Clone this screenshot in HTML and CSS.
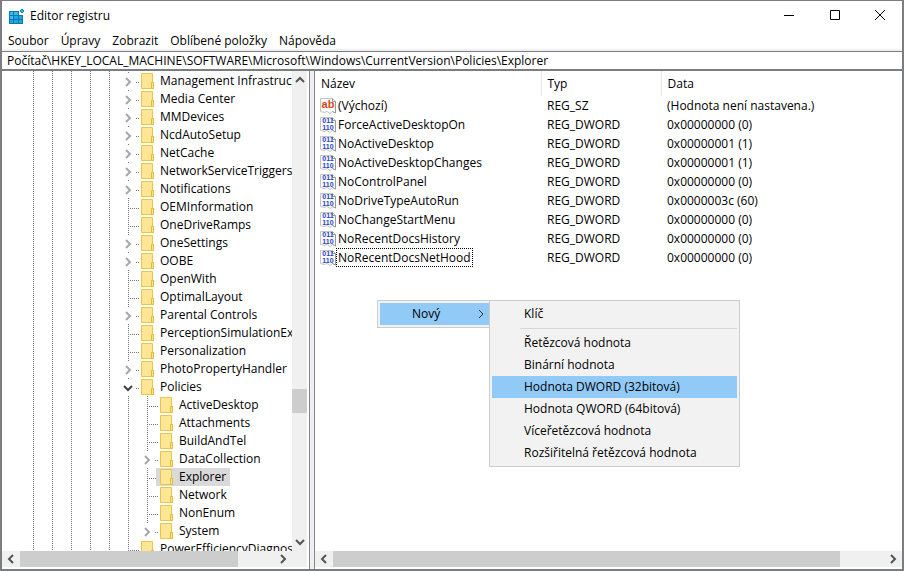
FILE: index.html
```html
<!DOCTYPE html>
<html lang="cs">
<head>
  <meta charset="UTF-8" />
  <meta name="viewport" content="width=device-width, initial-scale=1.0"/>
  <title>Editor registru</title>
  <link rel="stylesheet" href="styles.css">
</head>
<body>

  <!-- Shared icons -->
  <svg class="sprite" aria-hidden="true">
    <symbol id="folder" viewBox="0 0 14 16">
      <path d="M0.5 0.5H11.5V9.5H12.5V15.5H0.5Z" fill="#ffe694" stroke="#e8c64a"/>
      <path d="M10.5 15V9.5H12.5V15.5H10.5" fill="#ffe694" stroke="#e3bb35"/>
    </symbol>
    <symbol id="right" viewBox="0 0 10 10">
      <path d="M3 1L7 5L3 9" fill="none" stroke="currentColor" stroke-width="2"/>
    </symbol>
    <symbol id="left" viewBox="0 0 10 10">
      <path d="M7 1L3 5L7 9" fill="none" stroke="currentColor" stroke-width="2"/>
    </symbol>
    <symbol id="down" viewBox="0 0 10 10">
      <path d="M1 3L5 7L9 3" fill="none" stroke="currentColor" stroke-width="2"/>
    </symbol>
    <symbol id="up" viewBox="0 0 10 10">
      <path d="M1 7L5 3L9 7" fill="none" stroke="currentColor" stroke-width="2"/>
    </symbol>
    <symbol id="page" viewBox="0 0 16 16">
      <path d="M0.5 0.5H12.5L15.5 3.5V15L12.5 13.5L10 15.5L7 13.5L4 14.5L0.5 13.5Z" fill="#fbfbfb" stroke="#c4c4c4"/>
      <path d="M12.5 0.5V3.5H15.5V15L12.5 13.5" fill="none" stroke="#999"/>
    </symbol>
  </svg>

  <div class="window">
    <header class="title-bar">
      <svg class="app-icon" viewBox="0 0 17 17">
        <path d="M0 3H10V7H14V16H0Z" fill="#0878ad"/>
        <path d="M1 4H4V7H1ZM5 4H9V7H5ZM1 8H4V11H1Z" fill="#39bdf2"/>
        <path d="M5 8H9V11H5ZM10 8H13V11H10ZM1 12H4V15H1ZM5 12H9V15H5ZM10 12H13V15H10Z" fill="#22a5df"/>
        <path d="M13 1L15 3L13 5L11 3Z" fill="#39bdf2" stroke="#0878ad"/>
      </svg>
      <h1>Editor registru</h1>
      <div class="window-buttons">
        <button aria-label="Minimalizovat"><svg viewBox="0 0 10 10"><path d="M0 5.5H10"/></svg></button>
        <button aria-label="Maximalizovat"><svg viewBox="0 0 10 10"><path d="M0.5 0.5H9.5V9.5H0.5Z"/></svg></button>
        <button aria-label="Zavřít"><svg viewBox="0 0 10 10"><path d="M0 0L10 10M10 0L0 10"/></svg></button>
      </div>
    </header>

    <nav class="menu-bar">
      <button>Soubor</button>
      <button>Úpravy</button>
      <button>Zobrazit</button>
      <button>Oblíbené položky</button>
      <button>Nápověda</button>
    </nav>

    <input class="address" type="text" aria-label="Adresa" value="Počítač\HKEY_LOCAL_MACHINE\SOFTWARE\Microsoft\Windows\CurrentVersion\Policies\Explorer" />

    <main class="panes">
      <!-- Key tree -->
      <section class="pane tree-pane">
        <div class="pane-body">
          <ul class="tree">
            <li><button class="toggle" aria-label="Rozbalit"><svg><use href="#right"/></svg></button><a href="#"><svg><use href="#folder"/></svg>Management Infrastructure</a></li>
            <li><button class="toggle" aria-label="Rozbalit"><svg><use href="#right"/></svg></button><a href="#"><svg><use href="#folder"/></svg>Media Center</a></li>
            <li><button class="toggle" aria-label="Rozbalit"><svg><use href="#right"/></svg></button><a href="#"><svg><use href="#folder"/></svg>MMDevices</a></li>
            <li><button class="toggle" aria-label="Rozbalit"><svg><use href="#right"/></svg></button><a href="#"><svg><use href="#folder"/></svg>NcdAutoSetup</a></li>
            <li><button class="toggle" aria-label="Rozbalit"><svg><use href="#right"/></svg></button><a href="#"><svg><use href="#folder"/></svg>NetCache</a></li>
            <li><button class="toggle" aria-label="Rozbalit"><svg><use href="#right"/></svg></button><a href="#"><svg><use href="#folder"/></svg>NetworkServiceTriggers</a></li>
            <li><button class="toggle" aria-label="Rozbalit"><svg><use href="#right"/></svg></button><a href="#"><svg><use href="#folder"/></svg>Notifications</a></li>
            <li><span class="branch"></span><a href="#"><svg><use href="#folder"/></svg>OEMInformation</a></li>
            <li><span class="branch"></span><a href="#"><svg><use href="#folder"/></svg>OneDriveRamps</a></li>
            <li><button class="toggle" aria-label="Rozbalit"><svg><use href="#right"/></svg></button><a href="#"><svg><use href="#folder"/></svg>OneSettings</a></li>
            <li><button class="toggle" aria-label="Rozbalit"><svg><use href="#right"/></svg></button><a href="#"><svg><use href="#folder"/></svg>OOBE</a></li>
            <li><span class="branch"></span><a href="#"><svg><use href="#folder"/></svg>OpenWith</a></li>
            <li><span class="branch"></span><a href="#"><svg><use href="#folder"/></svg>OptimalLayout</a></li>
            <li><button class="toggle" aria-label="Rozbalit"><svg><use href="#right"/></svg></button><a href="#"><svg><use href="#folder"/></svg>Parental Controls</a></li>
            <li><span class="branch"></span><a href="#"><svg><use href="#folder"/></svg>PerceptionSimulationExtensions</a></li>
            <li><span class="branch"></span><a href="#"><svg><use href="#folder"/></svg>Personalization</a></li>
            <li><button class="toggle" aria-label="Rozbalit"><svg><use href="#right"/></svg></button><a href="#"><svg><use href="#folder"/></svg>PhotoPropertyHandler</a></li>
            <li><button class="toggle open" aria-label="Sbalit"><svg><use href="#down"/></svg></button><a href="#"><svg><use href="#folder"/></svg>Policies</a>
              <ul>
                <li><span class="branch"></span><a href="#"><svg><use href="#folder"/></svg>ActiveDesktop</a></li>
                <li><span class="branch"></span><a href="#"><svg><use href="#folder"/></svg>Attachments</a></li>
                <li><span class="branch"></span><a href="#"><svg><use href="#folder"/></svg>BuildAndTel</a></li>
                <li><button class="toggle" aria-label="Rozbalit"><svg><use href="#right"/></svg></button><a href="#"><svg><use href="#folder"/></svg>DataCollection</a></li>
                <li><span class="branch"></span><a href="#" class="selected"><svg><use href="#folder"/></svg>Explorer</a></li>
                <li><span class="branch"></span><a href="#"><svg><use href="#folder"/></svg>Network</a></li>
                <li><span class="branch"></span><a href="#"><svg><use href="#folder"/></svg>NonEnum</a></li>
                <li><button class="toggle" aria-label="Rozbalit"><svg><use href="#right"/></svg></button><a href="#"><svg><use href="#folder"/></svg>System</a></li>
              </ul>
            </li>
            <li><span class="branch"></span><a href="#"><svg><use href="#folder"/></svg>PowerEfficiencyDiagnostics</a></li>
          </ul>
          <div class="scrollbar vertical">
            <button aria-label="Nahoru"><svg><use href="#up"/></svg></button>
            <div class="track tree-y"><div class="thumb"></div></div>
            <button aria-label="Dolů"><svg><use href="#down"/></svg></button>
          </div>
        </div>
        <div class="scrollbar horizontal with-corner">
          <button aria-label="Doleva"><svg><use href="#left"/></svg></button>
          <div class="track tree-x"><div class="thumb"></div></div>
          <button aria-label="Doprava"><svg><use href="#right"/></svg></button>
        </div>
      </section>

      <!-- Values of the selected key -->
      <section class="pane values-pane">
        <div class="pane-body">
          <table class="values">
            <thead>
              <tr><th class="col-name">Název</th><th class="col-type">Typ</th><th>Data</th></tr>
            </thead>
            <tbody>
              <tr><td><i class="icon ab"><svg><use href="#page"/></svg><b>ab</b></i><span>(Výchozí)</span></td><td>REG_SZ</td><td>(Hodnota není nastavena.)</td></tr>
              <tr><td><i class="icon bits"><svg><use href="#page"/></svg><b>011<br>110</b></i><span>ForceActiveDesktopOn</span></td><td>REG_DWORD</td><td>0x00000000 (0)</td></tr>
              <tr><td><i class="icon bits"><svg><use href="#page"/></svg><b>011<br>110</b></i><span>NoActiveDesktop</span></td><td>REG_DWORD</td><td>0x00000001 (1)</td></tr>
              <tr><td><i class="icon bits"><svg><use href="#page"/></svg><b>011<br>110</b></i><span>NoActiveDesktopChanges</span></td><td>REG_DWORD</td><td>0x00000001 (1)</td></tr>
              <tr><td><i class="icon bits"><svg><use href="#page"/></svg><b>011<br>110</b></i><span>NoControlPanel</span></td><td>REG_DWORD</td><td>0x00000000 (0)</td></tr>
              <tr><td><i class="icon bits"><svg><use href="#page"/></svg><b>011<br>110</b></i><span>NoDriveTypeAutoRun</span></td><td>REG_DWORD</td><td>0x0000003c (60)</td></tr>
              <tr><td><i class="icon bits"><svg><use href="#page"/></svg><b>011<br>110</b></i><span>NoChangeStartMenu</span></td><td>REG_DWORD</td><td>0x00000000 (0)</td></tr>
              <tr><td><i class="icon bits"><svg><use href="#page"/></svg><b>011<br>110</b></i><span>NoRecentDocsHistory</span></td><td>REG_DWORD</td><td>0x00000000 (0)</td></tr>
              <tr><td><i class="icon bits"><svg><use href="#page"/></svg><b>011<br>110</b></i><span class="focused">NoRecentDocsNetHood</span></td><td>REG_DWORD</td><td>0x00000000 (0)</td></tr>
            </tbody>
          </table>
        </div>
        <div class="scrollbar horizontal">
          <button aria-label="Doleva"><svg><use href="#left"/></svg></button>
          <div class="track values-x"><div class="thumb"></div></div>
          <button aria-label="Doprava"><svg><use href="#right"/></svg></button>
        </div>

        <!-- Context menu -->
        <div class="popup context-menu">
          <button class="active">Nový<svg viewBox="0 0 10 10"><path d="M3 1L7 5L3 9"/></svg></button>
          <div class="popup submenu">
            <button>Klíč</button>
            <hr>
            <button>Řetězcová hodnota</button>
            <button>Binární hodnota</button>
            <button class="active">Hodnota DWORD (32bitová)</button>
            <button>Hodnota QWORD (64bitová)</button>
            <button>Víceřetězcová hodnota</button>
            <button>Rozšiřitelná řetězcová hodnota</button>
          </div>
        </div>
      </section>
    </main>
  </div>

</body>
</html>
```

FILE: styles.css
```css
* {
  box-sizing: border-box;
}

body {
  margin: 0;
  font-family: "Segoe UI", "Open Sans", "Noto Sans", sans-serif;
  font-size: 12px;
  line-height: 18px;
  color: #000;
}

button {
  padding: 0;
  border: none;
  background: none;
  font: inherit;
  color: inherit;
}

svg {
  display: block;
  flex: none;
}

.sprite {
  position: absolute;
  width: 0;
  height: 0;
}

.window {
  display: flex;
  flex-direction: column;
  height: 100vh;
  border: 2px solid #7c7d83;
  border-top-width: 1px;
  background: #fff;
}

/* Title bar */
.title-bar {
  display: flex;
  align-items: center;
  height: 30px;
  padding-left: 7px;
}

.app-icon {
  width: 17px;
  height: 17px;
}

.title-bar h1 {
  margin: 0 0 0 4px;
  font-size: 12px;
  font-weight: normal;
}

.window-buttons {
  display: flex;
  align-self: flex-start;
  margin-left: auto;
}

.window-buttons button {
  display: flex;
  align-items: center;
  justify-content: center;
  width: 46px;
  height: 28px;
}

.window-buttons button:last-child {
  width: 44px;
}

.window-buttons svg {
  width: 10px;
  height: 10px;
  fill: none;
  stroke: #000;
  overflow: visible;
}

.menu-bar {
  display: flex;
  align-items: flex-end;
  height: 20px;
  border-bottom: 2px solid #f0f0f0;
}

.menu-bar button {
  padding: 0 6px;
  line-height: 17px;
}

.address {
  width: 100%;
  height: 20px;
  padding: 0 5px;
  border: solid #7c7d83;
  border-width: 1px 0 2px;
  font: inherit;
  outline: none;
}

/* Panes */
.panes {
  flex: 1;
  display: flex;
  gap: 4px;
  min-height: 0;
  background: #f0f0f0;
}

.pane {
  display: flex;
  flex-direction: column;
  min-width: 0;
  background: #fff;
}

.tree-pane {
  width: 35%;
  max-width: 308px;
  padding-right: 2px;
  border-right: 1px solid #83858c;
}

.values-pane {
  position: relative;
  flex: 1;
  border-left: 1px solid #83858c;
}

.pane-body {
  flex: 1;
  display: flex;
  min-height: 0;
  overflow: hidden;
}

/* Tree */
.tree,
.tree ul {
  margin: 0;
  padding: 0;
  list-style: none;
}

.tree {
  --dots: linear-gradient(#777 50%, transparent 50%);
  --dots-across: linear-gradient(90deg, #777 50%, transparent 50%);
  --dot: linear-gradient(#777, #777);
  flex: 1;
  min-width: 0;
  overflow: hidden;
  padding: 1px 0 0 117px;
  background:
    var(--dots) 31px 0 / 1px 2px repeat-y,
    var(--dots) 50px 0 / 1px 2px repeat-y,
    var(--dots) 69px 0 / 1px 2px repeat-y,
    var(--dots) 88px 0 / 1px 2px repeat-y,
    var(--dots) 107px 0 / 1px 2px repeat-y;
}

.tree li {
  display: grid;
  grid-template-columns: 18px auto;
  justify-content: start;
}

.tree ul {
  grid-column: 1 / -1;
  padding-left: 19px;
  background: var(--dots) 9px 0 / 1px 2px repeat-y;
}

.branch,
.toggle {
  height: 18px;
}

.branch {
  padding-left: 9px;
  background:
    var(--dots) 9px 0 / 1px 2px repeat-y border-box border-box,
    var(--dots-across) 0 10px / 2px 1px repeat-x content-box content-box;
}

.toggle {
  display: flex;
  align-items: center;
  padding: 2px 0 0 4px;
  background:
    var(--dot) 9px 0 / 1px 1px no-repeat,
    var(--dot) 17px 10px / 1px 1px no-repeat;
  color: #a6a6a6;
}

.toggle.open {
  color: #404040;
}

.toggle svg {
  width: 10px;
  height: 10px;
}

.tree a {
  display: flex;
  align-items: center;
  gap: 5px;
  padding: 0 4px;
  background: var(--dot) 1px 10px / 1px 1px no-repeat;
  color: inherit;
  text-decoration: none;
  white-space: nowrap;
}

.tree a svg {
  width: 14px;
  height: 16px;
}

.tree a.selected {
  background: #d9d9d9;
}

/* Scrollbars */
.scrollbar {
  display: flex;
  flex: none;
  background: #f0f0f0;
  color: #555;
}

.scrollbar button {
  display: flex;
  align-items: center;
  justify-content: center;
  width: 18px;
  height: 16px;
}

.scrollbar svg {
  width: 10px;
  height: 10px;
}

.vertical {
  flex-direction: column;
  width: 15px;
}

.vertical button {
  width: 15px;
  height: 18px;
}

.horizontal {
  height: 16px;
  margin-bottom: 2px;
}

.with-corner {
  padding-right: 15px;
}

.track {
  flex: 1;
  display: flex;
}

.vertical .track {
  flex-direction: column;
}

.thumb {
  background: #cdcdcd;
}

.tree-y::before {
  content: "";
  flex: 300;
}

.tree-y .thumb {
  height: 24px;
}

.tree-y::after {
  content: "";
  flex: 120;
}

.tree-x .thumb {
  width: 86%;
}

.values-x .thumb {
  width: 92%;
}

/* Values */
.values {
  width: 100%;
  height: max-content;
  border-collapse: collapse;
  table-layout: fixed;
  text-align: left;
}

.values th {
  height: 25px;
  padding: 0 6px;
  font-weight: normal;
  border-right: 1px solid #e5e5e5;
}

.values th:last-child {
  border-right: none;
}

.col-name {
  width: 226px;
}

.col-type {
  width: 120px;
}

.values td {
  height: 19px;
  padding: 0 6px;
  white-space: nowrap;
}

.values td:first-child {
  display: flex;
  align-items: center;
  padding-left: 5px;
}

.values span {
  padding: 0 1px;
  border: 1px solid transparent;
  line-height: 17px;
}

.values span.focused {
  border: 1px dotted #000;
}

/* Value icons: letters over a torn page */
.icon {
  position: relative;
  width: 16px;
  height: 16px;
  font-family: "Liberation Sans", Arial, sans-serif;
  font-style: normal;
  text-align: center;
}

.icon svg {
  width: 16px;
  height: 16px;
}

.icon b {
  position: absolute;
  inset: 0 1px auto;
}

.ab b {
  font-size: 11px;
  line-height: 12px;
  color: #d04a20;
}

.bits b {
  font-size: 7px;
  line-height: 7px;
  color: #1f45c8;
}

/* Popup menus */
.popup {
  position: absolute;
  padding: 2px;
  border: 1px solid #ccc;
  background: #f2f2f2;
}

.popup button {
  display: flex;
  align-items: center;
  width: 100%;
  height: 22px;
  padding-left: 32px;
  white-space: nowrap;
}

.popup button.active {
  background: #91c9f7;
}

.popup hr {
  margin: 3px 0 3px 28px;
  border: none;
  border-top: 1px solid #d7d7d7;
}

.popup svg {
  width: 10px;
  height: 10px;
  margin: 0 4px 0 auto;
  fill: none;
  stroke: #333;
}

.context-menu {
  top: 229px;
  left: 62px;
  width: 114px;
  padding-right: 0;
}

.submenu {
  top: -1px;
  left: 111px;
  width: 251px;
}
```
